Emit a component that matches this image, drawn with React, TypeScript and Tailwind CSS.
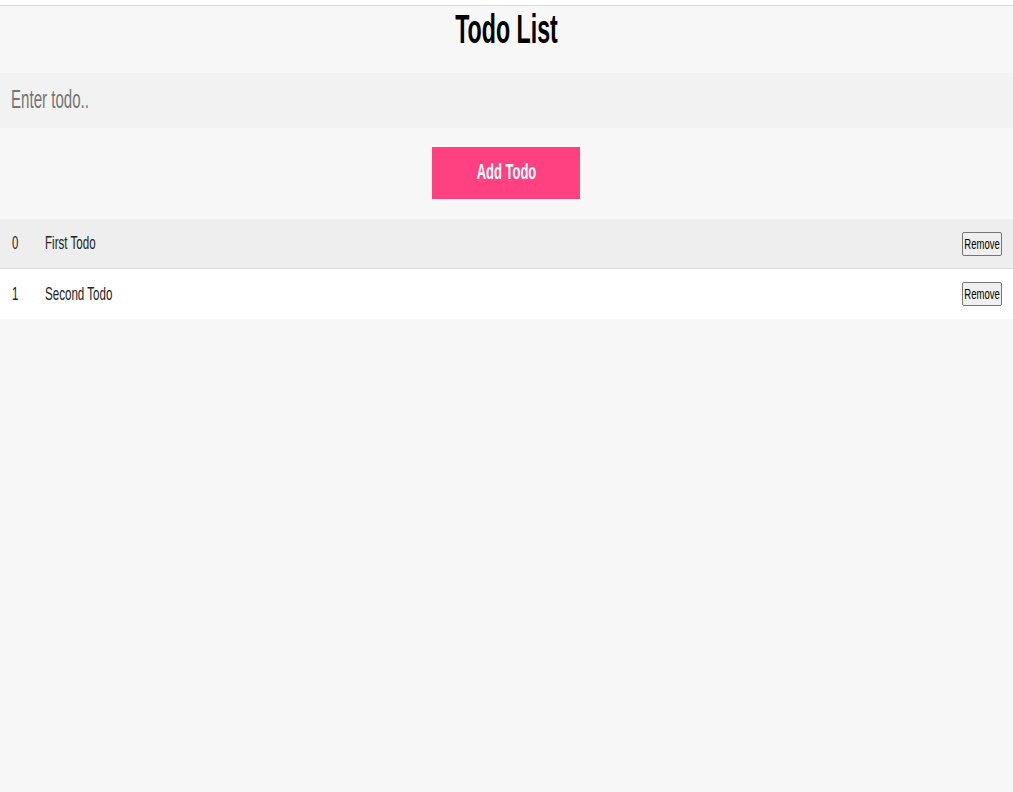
import { useState } from "react";

type Todo = { id: number; text: string };

// The reference is rendered with horizontally condensed type, so text
// spans get a scale-x squeeze instead of a narrow font.
function Squeezed({
  children,
  className = "",
}: {
  children: React.ReactNode;
  className?: string;
}) {
  return (
    <span className={"inline-block whitespace-nowrap " + className}>
      {children}
    </span>
  );
}

function TodoRow({
  todo,
  index,
  onRemove,
}: {
  todo: Todo;
  index: number;
  onRemove: () => void;
}) {
  const odd = index % 2 === 0;
  return (
    <li
      className={
        "flex items-center pl-[12px] pr-[11px] " +
        (odd
          ? "h-[50px] border-b border-[#dcdcdc] bg-[#eeeeee]"
          : "h-[50px] bg-white")
      }
    >
      <span className="w-[33px] shrink-0">
        <Squeezed className="origin-left scale-x-[0.6] text-[19px] text-[#222]">
          {index}
        </Squeezed>
      </span>
      <span className="min-w-0 flex-1">
        <Squeezed className="origin-left scale-x-[0.61] text-[19px] text-[#222]">
          {todo.text}
        </Squeezed>
      </span>
      <button
        onClick={onRemove}
        className="flex h-[24px] w-[40px] items-center justify-center overflow-hidden rounded-[2px] border border-[#767676] bg-[#efefef]"
      >
        <Squeezed className="origin-center scale-x-[0.68] text-[14px] leading-none text-black">
          Remove
        </Squeezed>
      </button>
    </li>
  );
}

export default function App() {
  const [todos, setTodos] = useState<Todo[]>([
    { id: 1, text: "First Todo" },
    { id: 2, text: "Second Todo" },
  ]);
  const [draft, setDraft] = useState("");

  const add = () => {
    if (!draft.trim()) return;
    setTodos((t) => [...t, { id: Date.now(), text: draft.trim() }]);
    setDraft("");
  };

  return (
    <div className="min-h-screen bg-[#f7f7f7] font-['Liberation_Sans',Arial,sans-serif]">
      <div className="h-[6px] border-b border-[#dddddd] bg-white" />

      <h1 className="flex h-[67px] justify-center pt-[3px]">
        <Squeezed className="origin-center scale-x-[0.58] text-[40px] font-bold leading-none text-black">
          Todo List
        </Squeezed>
      </h1>

      <div className="h-[55px] overflow-hidden">
        <input
          value={draft}
          onChange={(e) => setDraft(e.target.value)}
          placeholder="Enter todo.."
          className="h-[55px] w-[1746px] origin-left scale-x-[0.58] bg-[#f2f2f2] pb-[3px] pl-[19px] text-[26px] text-[#333] outline-none placeholder:text-[#757575]"
        />
      </div>

      <div className="flex justify-center pb-[20px] pt-[19px]">
        <button
          onClick={add}
          className="ml-[-1px] flex h-[52px] w-[148px] items-center justify-center bg-[#ff4081] pb-[3px]"
        >
          <Squeezed className="origin-center scale-x-[0.59] text-[22px] font-bold leading-none text-white">
            Add Todo
          </Squeezed>
        </button>
      </div>

      <ul>
        {todos.map((todo, i) => (
          <TodoRow
            key={todo.id}
            todo={todo}
            index={i}
            onRemove={() => setTodos((t) => t.filter((x) => x.id !== todo.id))}
          />
        ))}
      </ul>
    </div>
  );
}
